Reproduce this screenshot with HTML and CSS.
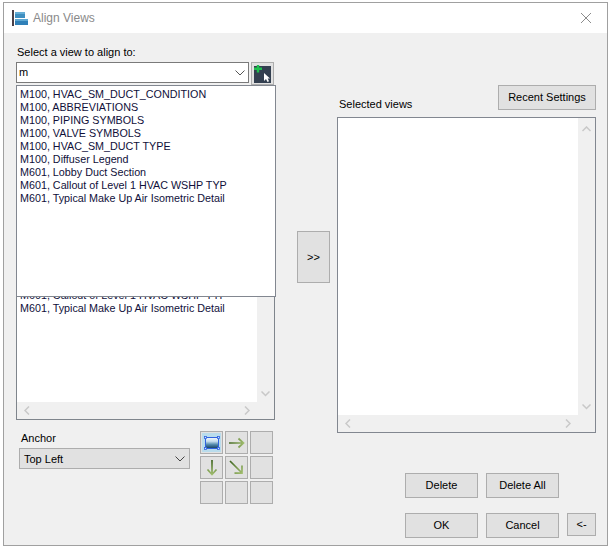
FILE: index.html
```html
<!DOCTYPE html>
<html lang="en">
<head>
<meta charset="utf-8">
<title>Align Views</title>
<link rel="stylesheet" href="styles.css">
</head>
<body>
<div class="window">
  <header class="titlebar">
    <svg class="app-icon" width="16" height="17" viewBox="0 0 16 17">
      <rect x="0" y="0" width="2" height="16" fill="#4a4048"/>
      <rect x="3" y="2" width="10" height="6" fill="#3f8fc0"/>
      <rect x="3" y="2" width="10" height="2" fill="#66aed6"/>
      <rect x="3" y="9" width="13" height="6" fill="#2f80b8"/>
      <rect x="3" y="9" width="13" height="2" fill="#5ea8d2"/>
    </svg>
    <span class="title">Align Views</span>
    <svg class="close" width="12" height="12" viewBox="0 0 12 12"><path d="M1 1L11 11M11 1L1 11" stroke="#8c8c8c" stroke-width="1" fill="none"/></svg>
  </header>
  <main class="content">
    <section class="left">
      <div class="label">Select a view to align to:</div>
      <div class="combo-row">
        <div class="combo">
          <span class="combo-text">m</span>
          <svg class="chev" width="10" height="6" viewBox="0 0 10 6"><path d="M0.5 0.5L5 5L9.5 0.5" stroke="#555" fill="none"/></svg>
        </div>
        <button class="pick">
          <svg width="17" height="18" viewBox="0 0 17 18">
            <rect y="1" width="17" height="17" fill="#333f50"/>
            <path d="M4 0V7.500M0 3.750H8" stroke="#1fc04f" stroke-width="2.400" fill="none"/>
            <path d="M10 8V16L12 14L13.500 17L15 16.300L13.700 13.500H16Z" fill="#fff"/>
          </svg>
        </button>
      </div>
      <div class="dropdown">
        <div class="item">M100, HVAC_SM_DUCT_CONDITION</div>
        <div class="item">M100, ABBREVIATIONS</div>
        <div class="item">M100, PIPING SYMBOLS</div>
        <div class="item">M100, VALVE SYMBOLS</div>
        <div class="item">M100, HVAC_SM_DUCT TYPE</div>
        <div class="item">M100, Diffuser Legend</div>
        <div class="item">M601, Lobby Duct Section</div>
        <div class="item">M601, Callout of Level 1 HVAC WSHP TYP</div>
        <div class="item">M601, Typical Make Up Air Isometric Detail</div>
      </div>
      <div class="listbox views">
        <div class="list-body list-body-left">
          <div class="item">M601, Callout of Level 1 HVAC WSHP TYP</div>
          <div class="item">M601, Typical Make Up Air Isometric Detail</div>
        </div>
        <div class="vbar bar-left">
          <svg class="bar-chev" width="9" height="6" viewBox="0 0 9 6"><path d="M0.500 0.500L4.500 4.500L8.500 0.500" stroke="#c8c8c8" stroke-width="1.500" fill="none"/></svg>
        </div>
        <div class="hbar">
          <svg class="bar-chev" width="6" height="9" viewBox="0 0 6 9"><path d="M5 0.500L1 4.500L5 8.500" stroke="#c8c8c8" stroke-width="1.500" fill="none"/></svg>
          <svg class="bar-chev" width="6" height="9" viewBox="0 0 6 9"><path d="M1 0.500L5 4.500L1 8.500" stroke="#c8c8c8" stroke-width="1.500" fill="none"/></svg>
        </div>
      </div>
      <div class="anchor-row">
        <div class="anchor-col">
          <div class="anchor-label">Anchor</div>
          <div class="select">
            <span>Top Left</span>
            <svg class="chev" width="10" height="6" viewBox="0 0 10 6"><path d="M0.500 0.500L5 5L9.500 0.500" stroke="#444" fill="none"/></svg>
          </div>
        </div>
        <div class="anchor-grid">
          <button class="cell cell-on">
            <svg width="16" height="14" viewBox="0 0 16 14">
              <defs>
                <linearGradient id="pic" x1="0" y1="0" x2="0" y2="1"><stop offset="0" stop-color="#f2f8fc"/><stop offset=".35" stop-color="#c5dcec"/><stop offset=".65" stop-color="#4f87aa"/><stop offset="1" stop-color="#143c5e"/></linearGradient>
              </defs>
              <rect x="1.500" y="1.500" width="13" height="11" fill="url(#pic)" stroke="#2f62e0"/>
              <rect x="0.500" y="0.500" width="2" height="2" fill="#cfe0ff" stroke="#2f62e0" stroke-width=".8"/>
              <rect x="13.500" y="0.500" width="2" height="2" fill="#cfe0ff" stroke="#2f62e0" stroke-width=".8"/>
              <rect x="0.500" y="11.500" width="2" height="2" fill="#cfe0ff" stroke="#2f62e0" stroke-width=".8"/>
              <rect x="13.500" y="11.500" width="2" height="2" fill="#cfe0ff" stroke="#2f62e0" stroke-width=".8"/>
            </svg>
          </button>
          <button class="cell">
            <svg width="16" height="12" viewBox="0 0 16 12">
              <defs><linearGradient id="ah" gradientUnits="userSpaceOnUse" x1="0" y1="0" x2="16" y2="0"><stop offset="0" stop-color="#3f6520"/><stop offset="1" stop-color="#a8c474"/></linearGradient></defs>
              <path d="M0 6H14.500M9.500 1.500L14.500 6L9.500 10.500" stroke="url(#ah)" stroke-width="1.700" fill="none"/>
            </svg>
          </button>
          <button class="cell"></button>
          <button class="cell">
            <svg width="12" height="16" viewBox="0 0 12 16">
              <defs><linearGradient id="av" gradientUnits="userSpaceOnUse" x1="0" y1="0" x2="0" y2="16"><stop offset="0" stop-color="#3f6520"/><stop offset="1" stop-color="#a8c474"/></linearGradient></defs>
              <path d="M6 0V14.500M1.500 9.500L6 14.500L10.500 9.500" stroke="url(#av)" stroke-width="1.700" fill="none"/>
            </svg>
          </button>
          <button class="cell">
            <svg width="15" height="15" viewBox="0 0 15 15">
              <defs><linearGradient id="ad" gradientUnits="userSpaceOnUse" x1="1" y1="1" x2="14" y2="14"><stop offset="0" stop-color="#3e6420"/><stop offset="1" stop-color="#a8c474"/></linearGradient></defs>
              <path d="M1 1L13 13M13 5.500V13.200H5.500" stroke="url(#ad)" stroke-width="1.700" fill="none"/>
            </svg>
          </button>
          <button class="cell"></button>
          <button class="cell"></button>
          <button class="cell"></button>
          <button class="cell"></button>
        </div>
      </div>
    </section>
    <div class="middle">
      <button class="btn add">&gt;&gt;</button>
    </div>
    <section class="right">
      <div class="right-head">
        <div class="label">Selected views</div>
        <button class="btn recent">Recent Settings</button>
      </div>
      <div class="listbox selected">
        <div class="list-body"></div>
        <div class="vbar vbar-both">
          <svg class="bar-chev" width="9" height="6" viewBox="0 0 9 6"><path d="M0.500 5L4.500 1L8.500 5" stroke="#c8c8c8" stroke-width="1.500" fill="none"/></svg>
          <svg class="bar-chev" width="9" height="6" viewBox="0 0 9 6"><path d="M0.500 0.500L4.500 4.500L8.500 0.500" stroke="#c8c8c8" stroke-width="1.500" fill="none"/></svg>
        </div>
        <div class="hbar">
          <svg class="bar-chev" width="6" height="9" viewBox="0 0 6 9"><path d="M5 0.500L1 4.500L5 8.500" stroke="#c8c8c8" stroke-width="1.500" fill="none"/></svg>
          <svg class="bar-chev" width="6" height="9" viewBox="0 0 6 9"><path d="M1 0.500L5 4.500L1 8.500" stroke="#c8c8c8" stroke-width="1.500" fill="none"/></svg>
        </div>
      </div>
      <div class="actions">
        <button class="btn action">Delete</button>
        <button class="btn action">Delete All</button>
      </div>
      <div class="actions actions-last">
        <button class="btn action">OK</button>
        <button class="btn action">Cancel</button>
        <button class="btn back">&lt;-</button>
      </div>
    </section>
  </main>
</div>
</body>
</html>
```
FILE: styles.css
```css
* { box-sizing: border-box; }
html, body { margin: 0; padding: 0; background: #fff; }
body {
  width: 611px;
  height: 548px;
  padding: 2px 3px;
  font: 11px/13px "Liberation Sans", Arial, sans-serif;
  color: #000;
  overflow: hidden;
}
.window {
  width: 605px;
  height: 544px;
  border: 1px solid #a0a0a0;
  background: #f0f0f0;
  display: flex;
  flex-direction: column;
}
.titlebar {
  height: 30px;
  flex: none;
  background: #fff;
  display: flex;
  align-items: center;
  padding: 0 15px 0 8px;
}
.app-icon { flex: none; margin-top: 1px; }
.title { margin-left: 5px; color: #8a8a8a; font-size: 12px; }
.close { margin-left: auto; }
.content { flex: 1; display: flex; min-height: 0; }
.left {
  position: relative;
  width: 272px;
  margin-left: 12px;
  flex: none;
  display: flex;
  flex-direction: column;
}
.label { line-height: 14px; }
.left > .label { margin-top: 12px; padding-left: 1px; }
.combo-row { display: flex; gap: 2px; margin-top: 3px; height: 23px; }
.combo {
  width: 233px;
  height: 21px;
  border: 1px solid #7a7a7a;
  background: #fff;
  display: flex;
  align-items: center;
  justify-content: space-between;
  padding: 0 3px 0 2px;
}
.chev { flex: none; }
.pick {
  width: 23px;
  height: 23px;
  padding: 0;
  border: 1px solid #adadad;
  background: #e1e1e1;
  display: flex;
  align-items: center;
  justify-content: center;
}
.dropdown {
  position: absolute;
  left: 0;
  top: 52px;
  width: 260px;
  height: 212px;
  padding: 2px 3px;
  background: #fff;
  border: 1px solid #828790;
  z-index: 2;
}
.item { height: 13px; line-height: 13px; white-space: nowrap; font-size: 10.75px; color: #10103a; }
.listbox {
  display: grid;
  grid-template-columns: 1fr 17px;
  grid-template-rows: 1fr 17px;
  border: 1px solid #828790;
  background: #f0f0f0;
}
.views { width: 259px; height: 335px; border-color: #7f858c; border-top: 0; }
.list-body { background: #fff; }
.list-body-left { padding: 204px 3px 0; overflow: hidden; }
.vbar {
  display: flex;
  flex-direction: column;
  align-items: center;
  justify-content: flex-end;
  padding-bottom: 5px;
}
.vbar-both { justify-content: space-between; padding-top: 8px; }
.hbar {
  grid-column: 1 / -1;
  display: flex;
  align-items: center;
  justify-content: space-between;
  padding: 0 24px 0 7px;
  background: #f0f0f0;
}
.bar-chev { display: block; }
.anchor-row { display: flex; margin-top: 11px; margin-left: 3px; }
.anchor-col { width: 181px; }
.anchor-label { padding-left: 2px; line-height: 14px; }
.select {
  width: 171px;
  height: 21px;
  margin-top: 3px;
  border: 1px solid #adadad;
  background: #e1e1e1;
  display: flex;
  align-items: center;
  justify-content: space-between;
  padding: 1px 4px 0;
}
.anchor-grid {
  display: grid;
  grid-template-columns: repeat(3, 23px);
  grid-auto-rows: 23px;
  gap: 2px;
}
.cell {
  padding: 0;
  border: 1px solid #adadad;
  background: #e1e1e1;
  display: flex;
  align-items: center;
  justify-content: center;
}
.cell-on { background: #b9dcec; box-shadow: inset 0 0 0 1px #e1e1e1; }
.btn {
  padding: 0;
  border: 1px solid #adadad;
  background: #e1e1e1;
  font: 11px/13px "Liberation Sans", Arial, sans-serif;
  color: #000;
}
.middle { width: 33px; margin-left: 9px; flex: none; }
.add { width: 33px; height: 52px; margin-top: 198px; }
.right {
  width: 259px;
  margin-left: 7px;
  flex: none;
  display: flex;
  flex-direction: column;
}
.right-head {
  height: 84px;
  display: flex;
  align-items: flex-end;
  justify-content: space-between;
  padding: 0 0 7px 2px;
}
.right-head .label { margin-bottom: -1px; }
.recent { width: 98px; height: 25px; }
.selected { height: 316px; }
.actions { display: flex; gap: 8px; padding-left: 68px; margin-top: 40px; }
.actions-last { margin-top: 15px; align-items: flex-start; }
.action { width: 73px; height: 25px; }
.back { width: 29px; height: 23px; }
```
